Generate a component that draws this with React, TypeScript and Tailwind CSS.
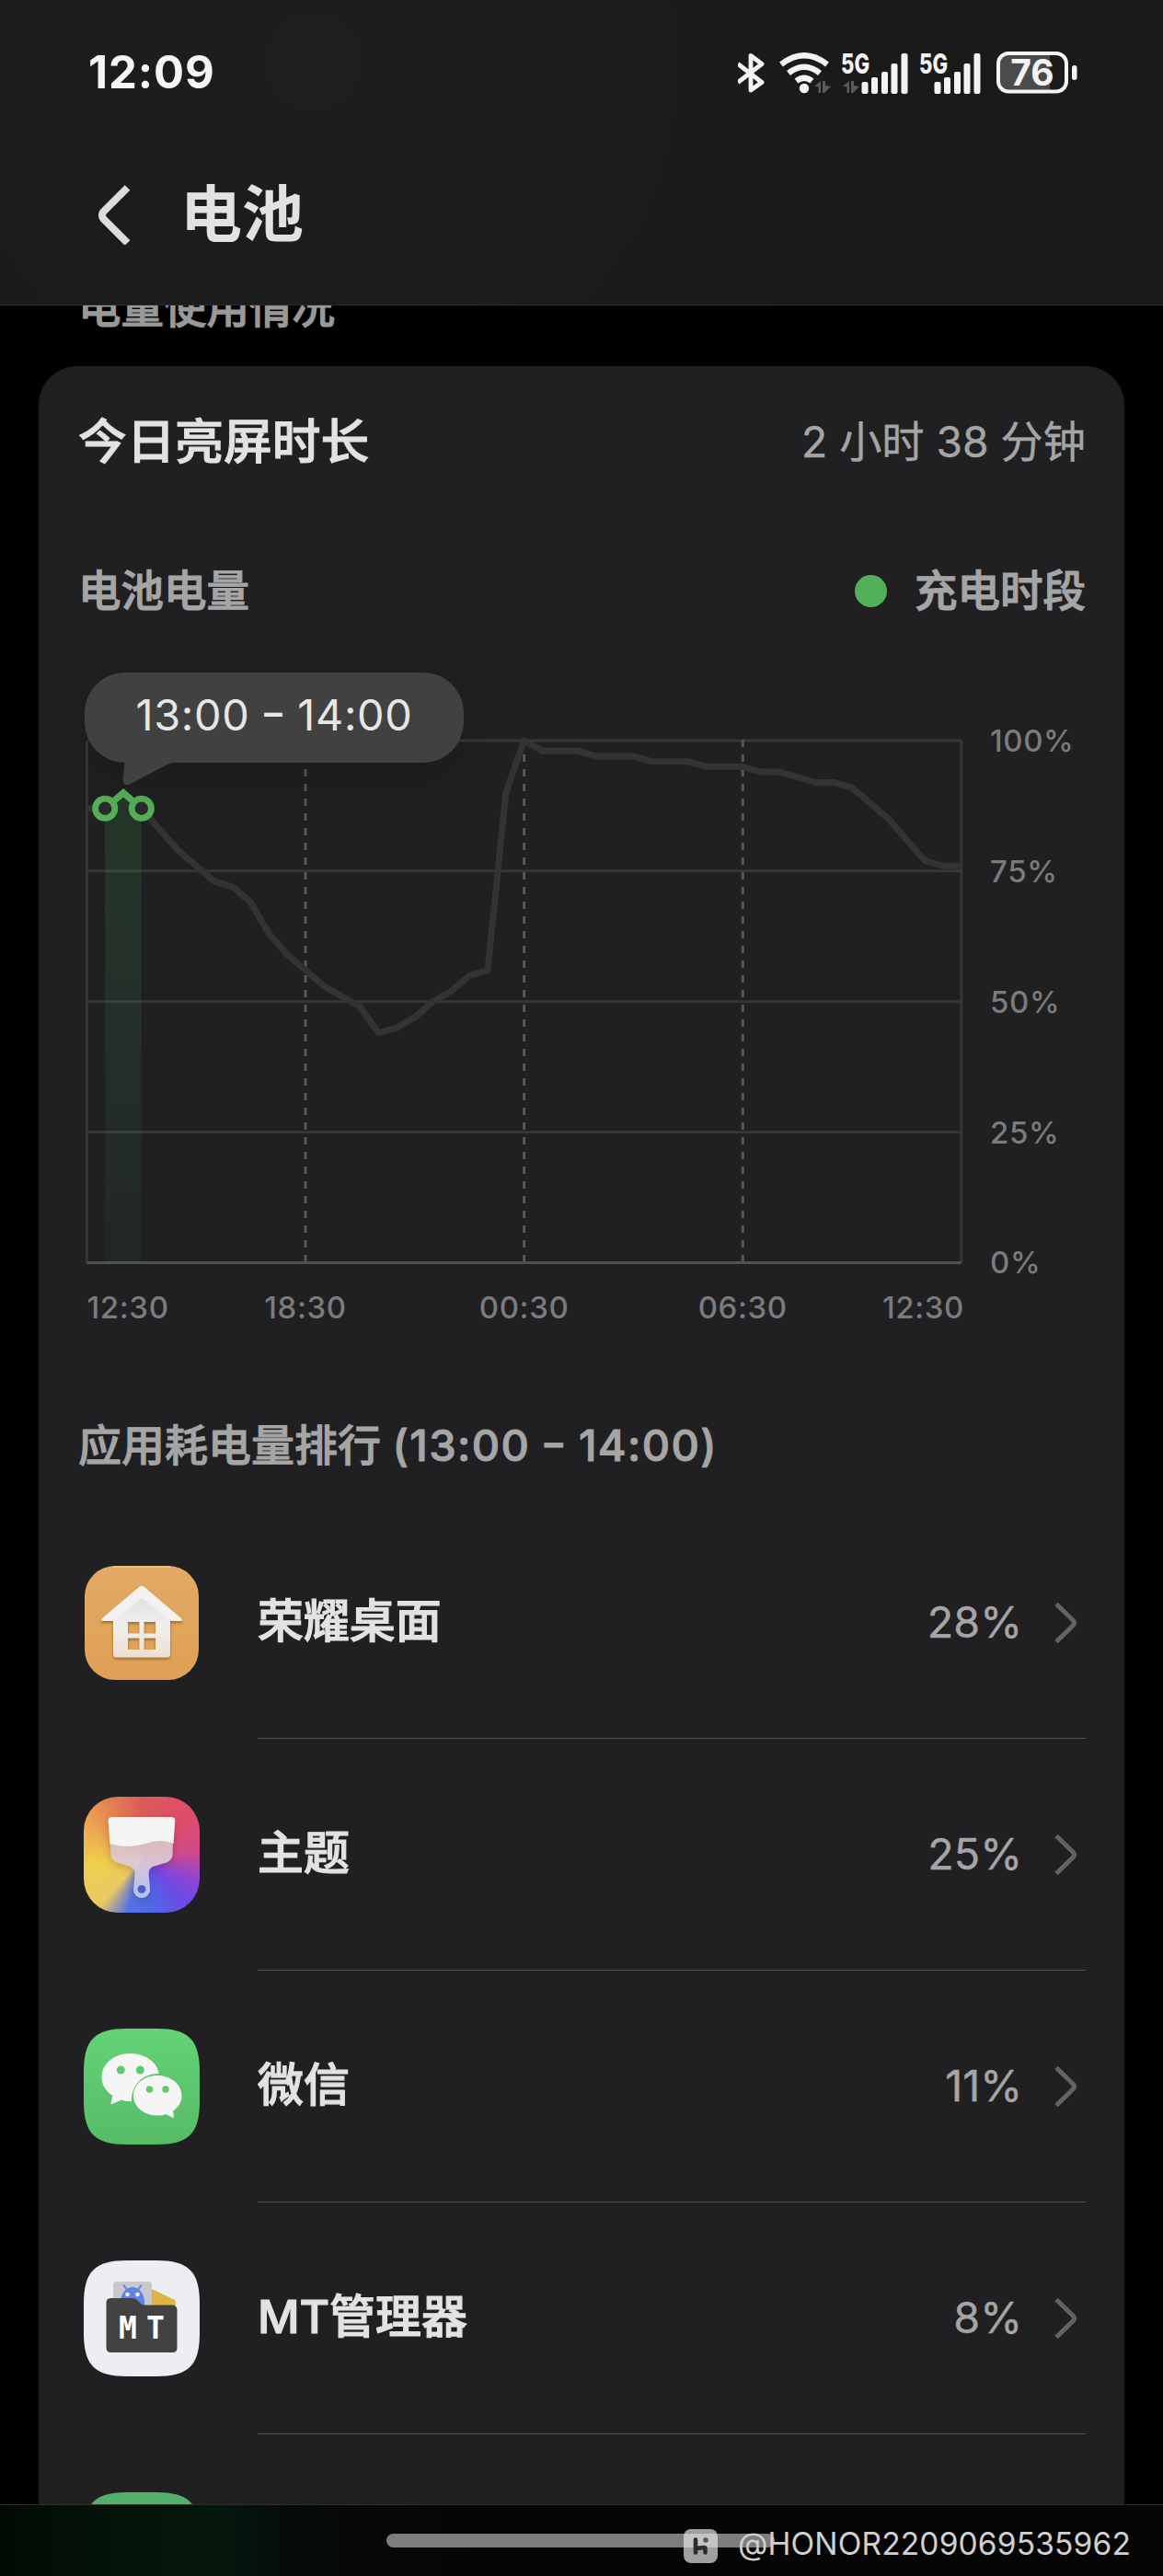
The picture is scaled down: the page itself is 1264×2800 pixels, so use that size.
import type { ReactNode } from 'react';

const SQUIRCLE =
  'M0 47C0 12 12 0 47 0H79C114 0 126 12 126 47V79C126 114 114 126 79 126H47C12 126 0 114 0 79Z';

// battery level, one sample every 30 minutes
const levels = [
  87, 87, 90, 87, 83, 79, 76, 73, 72, 69, 63, 59, 56, 53, 51, 49, 44, 45, 47, 50, 52, 55, 56, 90, 100,
  98, 98, 98, 97, 97, 97, 96, 96, 96, 95, 95, 95, 94, 94, 93, 92, 92, 91, 88, 85, 81, 77, 76, 76,
];

const LEFT = 52.4;
const TOP = 88;
const WIDTH = 950.4;
const HEIGHT = 567.4;

const px = (i: number) => LEFT + (WIDTH * i) / 48;
const py = (level: number) => TOP + HEIGHT * (1 - level / 100);
const points = (from: number, to: number) =>
  levels
    .slice(from, to + 1)
    .map((level, i) => `${px(from + i)},${py(level)}`)
    .join(' ');

// short dash, raised to the middle of the digits
function Dash() {
  return <span className="align-[4px] font-['Open_Sans',sans-serif] font-semibold leading-none">–</span>;
}

function Signal({ data }: { data?: boolean }) {
  return (
    <svg className="h-[46px] w-[72px] overflow-visible" viewBox="0 0 72 46" fill="#f3f3f3">
      <text x="-1" y="23.5" fontSize="30" fontWeight="800" textLength="31" lengthAdjust="spacingAndGlyphs">
        5G
      </text>
      {data && <path d="M1 38L8 32V45H5.5V38ZM10 32H13V37L19 38L12 45H10Z" fill="#5a5a5a" />}
      <rect x={data ? 21.5 : 15.5} y="33" width="7" height="13" rx="2" />
      <rect x={data ? 32 : 26} y="28" width="7" height="18" rx="2" />
      <rect x={data ? 43 : 37} y="22" width="7" height="24" rx="2" />
      <rect x={data ? 53.5 : 47.5} y="13" width="7" height="33" rx="2" />
      <rect x={data ? 64.5 : 58.5} y="2" width="7" height="44" rx="2" />
    </svg>
  );
}

function StatusBar() {
  return (
    <div className="flex h-[157px] items-center justify-between pl-[96px] pr-[93px]">
      <span className="text-[49px] font-bold leading-[60px] tracking-[0.9px] text-[#f5f5f5]">12:09</span>
      <div className="flex items-center">
        <svg className="mr-[16px] h-[44px] w-[29px]" viewBox="0 0 29 44" fill="none" stroke="#f3f3f3" strokeWidth="4.8" strokeLinejoin="round">
          <path d="M0 12.5L26 32.5L14 41V3.5L26 12.5L0 32.5" />
        </svg>
        <svg className="mr-[11px] h-[46px] w-[57px]" viewBox="0 0 57 46" fill="none" stroke="#f3f3f3" strokeWidth="6.2">
          <path d="M2 14Q27 -5.5 52 14" />
          <path d="M10 23.5Q27 10 44 23.5" />
          <path d="M18.5 32Q27 25.5 35.5 32" />
          <circle cx="27" cy="40" r="5.2" fill="#f3f3f3" stroke="none" />
          <path d="M38 38L45 32V45H42.5V38ZM47 32H50V37L56 38L49 45H47Z" fill="#5a5a5a" stroke="none" />
        </svg>
        <div className="mr-[13px] flex">
          <Signal data />
        </div>
        <div className="mr-[11px] flex">
          <Signal />
        </div>
        <svg className="h-[46px] w-[88px]" viewBox="0 0 88 46">
          <rect x="2" y="2" width="74" height="41.5" rx="11" fill="#1b1b1b" />
          <path d="M13 2H58V43.5H13Q2 43.5 2 32.5V13Q2 2 13 2Z" fill="#4b4b4b" />
          <rect x="2" y="2" width="74" height="41.5" rx="11" fill="none" stroke="#f3f3f3" strokeWidth="4" />
          <rect x="82" y="15" width="5.5" height="16" rx="2.7" fill="#f3f3f3" />
          <text x="39" y="37" fontSize="39" fontWeight="700" fill="#f3f3f3" textAnchor="middle">
            76
          </text>
        </svg>
      </div>
    </div>
  );
}

function Header() {
  return (
    <header className="relative z-10 h-[332px] border-b border-[#2d2d2d] bg-[#1b1b1b] bg-[radial-gradient(circle_at_27%_20%,#1e1e1e,#1a1a1a_60%)]">
      <StatusBar />
      <div className="flex items-center pl-[107px] pt-[43px]">
        <svg className="h-[66px] w-[36px]" viewBox="0 0 36 66" fill="none" stroke="#dcdcdc" strokeWidth="8" strokeLinejoin="round">
          <path d="M31.5 4L5.5 30Q2.5 34 5.5 38L31.5 64" />
        </svg>
        <h1 className="ml-[53px] text-[67px] font-bold leading-[66px] text-[#e2e2e2]">电池</h1>
      </div>
    </header>
  );
}

function BatteryChart() {
  const labels = ['100%', '75%', '50%', '25%', '0%'];

  return (
    <div className="relative h-[740px]">
      <svg className="h-[740px] w-[1180px]" viewBox="0 0 1180 740" fontSize="33" fontWeight="450" letterSpacing="0.6" fill="#7b7b7c">
        <defs>
          <linearGradient id="charge" x1="0" y1="0" x2="0" y2="1">
            <stop offset="0" stopColor="#3fb04a" stopOpacity="0.16" />
            <stop offset="1" stopColor="#40b080" stopOpacity="0.05" />
          </linearGradient>
        </defs>
        <g stroke="#363637" strokeWidth="3">
          {[0, 1, 2, 3].map((i) => (
            <line key={i} x1={LEFT} x2={LEFT + WIDTH} y1={TOP + (HEIGHT * i) / 4} y2={TOP + (HEIGHT * i) / 4} />
          ))}
          <line x1={LEFT} x2={LEFT} y1={TOP} y2={TOP + HEIGHT} />
          <line x1={LEFT + WIDTH} x2={LEFT + WIDTH} y1={TOP} y2={TOP + HEIGHT} />
        </g>
        {[12, 24, 36].map((i) => (
          <line key={i} x1={px(i)} x2={px(i)} y1={TOP - 1} y2={TOP + HEIGHT} stroke="#575758" strokeWidth="3" strokeDasharray="8 8" />
        ))}
        <line x1={LEFT} x2={LEFT + WIDTH} y1={TOP + HEIGHT} y2={TOP + HEIGHT} stroke="#505051" strokeWidth="3" />
        <polyline points={points(0, 48)} fill="none" stroke="#333334" strokeWidth="7" strokeLinejoin="round" />

        {/* selected hour */}
        <polygon points={`${points(1, 3)} ${px(3)},${py(0)} ${px(1)},${py(0)}`} fill="url(#charge)" />
        <polyline points={points(1, 3)} fill="none" stroke="#54b058" strokeWidth="7" />
        <circle cx={px(1)} cy={py(87)} r="10.6" fill="#2b2b2d" stroke="#54b058" strokeWidth="6.8" />
        <circle cx={px(3)} cy={py(87)} r="10.6" fill="#2b2b2d" stroke="#54b058" strokeWidth="6.8" />

        {labels.map((label, i) => (
          <text key={label} x="1034" y={TOP + (HEIGHT * i) / 4 + 12}>
            {label}
          </text>
        ))}
        <text x="52.5" y="716">12:30</text>
        <text x={px(12)} y="716" textAnchor="middle">18:30</text>
        <text x={px(24)} y="716" textAnchor="middle">00:30</text>
        <text x={px(36)} y="716" textAnchor="middle">06:30</text>
        <text x="1006" y="716" textAnchor="end">12:30</text>
      </svg>
      <div className="absolute left-[50px] top-[14px] flex h-[98px] w-[412px] items-center justify-center rounded-[44px] bg-[#414142] pb-[7px] shadow-[0_20px_50px_rgba(0,0,0,0.16)]">
        <span className="whitespace-pre text-[46.8px] leading-[60px] tracking-[0.7px] text-[#e6e6e6]">
          13:00 <Dash /> 14:00
        </span>
        <svg className="absolute left-[40px] top-[97px] h-[26px] w-[66px]" viewBox="0 0 66 26" fill="#414142">
          <path d="M3.5 0L1.5 20Q2 27 9 24.5L50 3Q55 0.5 62 0Z" />
        </svg>
      </div>
    </div>
  );
}

function DesktopIcon() {
  return (
    <svg className="size-[124px]" viewBox="0 0 124 124">
      <defs>
        <linearGradient id="desk" x1="0" y1="0" x2="0" y2="1">
          <stop offset="0" stopColor="#e2aa66" />
          <stop offset="1" stopColor="#dfa053" />
        </linearGradient>
        <linearGradient id="wall" x1="0" y1="0" x2="0" y2="1">
          <stop offset="0" stopColor="#dedede" />
          <stop offset="0.5" stopColor="#f0efed" />
          <stop offset="1" stopColor="#ecdfd0" />
        </linearGradient>
        <filter id="lift" x="-20%" y="-20%" width="140%" height="150%">
          <feDropShadow dx="0" dy="2" stdDeviation="1.8" floodColor="#6b3f10" floodOpacity="0.6" />
        </filter>
      </defs>
      <rect width="124" height="124" rx="33" fill="url(#desk)" />
      <path d="M30 1H94" stroke="#f0cf94" strokeWidth="1.5" opacity="0.7" />
      <g filter="url(#lift)">
        <path
          d="M62 28L93 53V96Q93 99.5 89.5 99.5H34.5Q31 99.5 31 96V53ZM47 61V73.5H59.5V61ZM64.5 61V73.5H77V61ZM47 78.5V91H59.5V78.5ZM64.5 78.5V91H77V78.5Z"
          fill="url(#wall)"
          fillRule="evenodd"
        />
        <path d="M58.5 23.5Q62 20 65.5 23.5L105.5 57.5Q107 60 104 60H93.5L62 35L31 60H20Q17 60 18.5 57.5Z" fill="#f2f2f2" />
      </g>
    </svg>
  );
}

function ThemeIcon() {
  return (
    <div className="size-[126px] overflow-hidden rounded-[37px] bg-[conic-gradient(from_0deg_at_50%_54%,#dc5a58_0deg,#df4d6a_45deg,#d04a88_80deg,#8745da_115deg,#6c4ae4_135deg,#5068e6_165deg,#5474e4_195deg,#a09ca4_209deg,#e8c964_222deg,#efd04c_265deg,#eca350_305deg,#e27a52_335deg,#dc5a58_360deg)]">
      <svg className="size-[126px]" viewBox="0 0 126 126">
        <defs>
          <linearGradient id="brush" x1="0" y1="0" x2="0" y2="1">
            <stop offset="0" stopColor="#dcc6c0" stopOpacity="0.9" />
            <stop offset="0.45" stopColor="#ddcadb" stopOpacity="0.92" />
            <stop offset="1" stopColor="#b4c2f4" />
          </linearGradient>
          <filter id="soft" x="-20%" y="-20%" width="140%" height="140%">
            <feDropShadow dx="0" dy="3" stdDeviation="4" floodColor="#401020" floodOpacity="0.25" />
          </filter>
        </defs>
        <g filter="url(#soft)">
          <path
            d="M29 45L97 45L96.5 63Q96 69 90 71.5L76 75.5Q70.5 77.5 70.5 83L72 101A9 9 0 1 1 54 101L55.5 83Q55.5 77.5 50 75.5L36 71.5Q30 69 29.5 63ZM63 96A4.5 4.5 0 1 0 63 105A4.5 4.5 0 1 0 63 96Z"
            fill="url(#brush)"
            fillRule="evenodd"
          />
          <path d="M31 22H95Q99.5 22 99.3 26L97.5 51Q83 45 69 50.5Q48 57 28.5 51L26.7 26Q26.5 22 31 22Z" fill="#f5f5f5" />
        </g>
      </svg>
    </div>
  );
}

function WeChatIcon() {
  return (
    <svg className="size-[126px]" viewBox="0 0 126 126">
      <defs>
        <linearGradient id="wx" x1="0" y1="0" x2="0" y2="1">
          <stop offset="0" stopColor="#63d377" />
          <stop offset="1" stopColor="#57bb66" />
        </linearGradient>
      </defs>
      <path d={SQUIRCLE} fill="url(#wx)" />
      <path
        d="M50.5 27C68 27 81 38 81.5 49C66 48 51.5 60 52 79Q46 79.5 41 77.5L31 82Q29 82.5 29.5 80.5L31.5 73C24 68 19.5 61 19.5 53C19.5 38 33 27 50.5 27Z"
        fill="#f5f5f5"
      />
      <path
        d="M80 51C94.5 51 106.5 60.5 106.5 73C106.5 79.5 103 85.5 97 89.5L98 95.5Q98 97.5 96 96.5L89.5 93Q85 94.5 80 94.5C65.5 94.5 54 85 54 73C54 60.5 65.5 51 80 51Z"
        fill="#f5f5f5"
      />
      <g fill="#5fc970">
        <circle cx="40.3" cy="45" r="4.5" />
        <circle cx="61.3" cy="45" r="4.5" />
        <circle cx="71.5" cy="66" r="3.7" />
        <circle cx="89" cy="66" r="3.7" />
      </g>
    </svg>
  );
}

function MtIcon() {
  return (
    <svg className="size-[126px]" viewBox="0 0 126 126">
      <path d={SQUIRCLE} fill="#edeef2" />
      <path d="M74 31L98 42.5Q101 44.5 99.5 49H74Z" fill="#dfb444" />
      <rect x="32" y="23" width="42" height="40" rx="3" fill="#c9c9ca" />
      <path d="M40 45A13 16 0 0 1 66 45V52H40Z" fill="#6080ea" />
      <path d="M43.5 27L47 32M62.5 27L59 32" stroke="#6080ea" strokeWidth="2" strokeLinecap="round" />
      <circle cx="47.5" cy="37" r="2.2" fill="#fff" />
      <circle cx="58.5" cy="37" r="2.2" fill="#fff" />
      <path d="M30 41H53Q56 41 58 43L62 47Q64 48.5 67 48.5H96Q101.5 48.5 101.5 54V95Q101.5 100 96.5 100H30Q24.5 100 24.5 95V46Q24.5 41 30 41Z" fill="#424242" />
      <g fill="#fff" fontFamily="'DejaVu Sans Mono', monospace" fontWeight="700" fontSize="33" textAnchor="middle">
        <text x="48" y="84.5">M</text>
        <text x="78" y="84.5">T</text>
      </g>
    </svg>
  );
}

type AppRowProps = { icon: ReactNode; name: string; value: string };

function AppRow({ icon, name, value }: AppRowProps) {
  return (
    <div className="flex h-[252px]">
      <div className="flex w-[195px] items-center justify-center pr-[57px]">{icon}</div>
      <div className="flex flex-1 items-center border-b border-[#505051]">
        <span className="flex-1 pb-[3px] text-[49.9px] font-medium leading-[60px] text-[#e2e2e2] [-webkit-text-stroke:1.2px_#e2e2e2]">{name}</span>
        <span className="pb-[2px] text-[46.7px] leading-[60px] text-[#a5a5a6] [-webkit-text-stroke:0.4px_#a5a5a6]">{value}</span>
        <svg className="ml-[35px] mr-[9px] h-[46px] w-[25px]" viewBox="0 0 25 46" fill="none" stroke="#636365" strokeWidth="5" strokeLinejoin="round">
          <path d="M2 2.5L20.5 20.5Q22.5 23 20.5 25.5L2 43.5" />
        </svg>
      </div>
    </div>
  );
}

function NavBar() {
  return (
    <footer className="relative z-10 flex h-[78px] justify-center border-t border-[#2d2d2d] bg-[linear-gradient(90deg,#020b04_0px,#04140a_130px,#05180e_240px,#060c09_310px,#070808_400px,#050505_520px,#050505)] pr-[2px] pt-[31px]">
      <div className="h-[15px] w-[422px] rounded-full bg-[#7d7d7d]" />
      <div className="absolute right-[35px] top-[25px] flex h-[38px] items-center">
        <svg className="h-[37px] w-[37px]" viewBox="0 0 37 37">
          <rect width="37" height="37" rx="8" fill="#e2e2e2" fillOpacity="0.7" />
          <path d="M13 11.5V25.5M23.5 20.5V25.5M14 21L22.5 20" stroke="#2c2c2c" strokeWidth="4.6" fill="none" strokeLinecap="round" />
          <circle cx="24" cy="12" r="2.8" fill="#555" />
        </svg>
        <span className="ml-[22px] pb-[5px] text-[33.5px] leading-[36px] tracking-[0.15px] text-[#d0d0d0]">@HONOR2209069535962</span>
      </div>
    </footer>
  );
}

export default function App() {
  return (
    <div className="flex h-[2800px] w-[1264px] flex-col overflow-hidden bg-black font-['Inter','Noto_Sans_CJK_SC',sans-serif]">
      <Header />
      <main className="h-[2390px] overflow-hidden">
        <h2 className="-mt-[31px] h-[97px] pl-[85px] text-[46.5px] font-medium leading-[66px] text-[#999] [-webkit-text-stroke:1.1px_#999]">
          电量使用情况
        </h2>
        <section className="mx-[42px] rounded-t-[42px] bg-[#202022]">
          <div className="ml-[43px] mr-[42px] flex h-[169px] items-center justify-between border-b border-[#1b1b1d] pb-[4px]">
            <span className="text-[52.7px] font-medium leading-[66px] text-[#e2e2e2] [-webkit-text-stroke:1px_#e2e2e2]">今日亮屏时长</span>
            <span className="text-[46.2px] leading-[60px] text-[#a5a5a6] [-webkit-text-stroke:0.4px_#a5a5a6]">2 小时 38 分钟</span>
          </div>
          <div className="ml-[43px] mr-[42px] flex h-[150px] items-center justify-between text-[46.5px] font-medium leading-[60px] text-[#a5a5a6] [-webkit-text-stroke:1.1px_#a5a5a6]">
            <span>电池电量</span>
            <div className="flex items-center">
              <i className="mr-[30px] size-[35px] rounded-full bg-[#54b058]" />
              <span>充电时段</span>
            </div>
          </div>
          <BatteryChart />
          <h3 className="ml-[43px] flex h-[181px] items-center pt-[46px] text-[47px] font-medium leading-[60px] text-[#a5a5a6] [-webkit-text-stroke:1px_#a5a5a6]">
            <span className="whitespace-pre">
              应用耗电量排行 <span className="tracking-[1.4px]">(13:00 <Dash /> 14:00)</span>
            </span>
          </h3>
          <div className="ml-[43px] mr-[42px]">
            <AppRow icon={<DesktopIcon />} name="荣耀桌面" value="28%" />
            <AppRow icon={<ThemeIcon />} name="主题" value="25%" />
            <AppRow icon={<WeChatIcon />} name="微信" value="11%" />
            <AppRow icon={<MtIcon />} name="MT管理器" value="8%" />
            <div className="pl-[6px] pt-[63px]">
              <svg className="size-[126px]" viewBox="0 0 126 126">
                <path d={SQUIRCLE} fill="#54b16b" />
              </svg>
            </div>
          </div>
        </section>
      </main>
      <NavBar />
    </div>
  );
}
